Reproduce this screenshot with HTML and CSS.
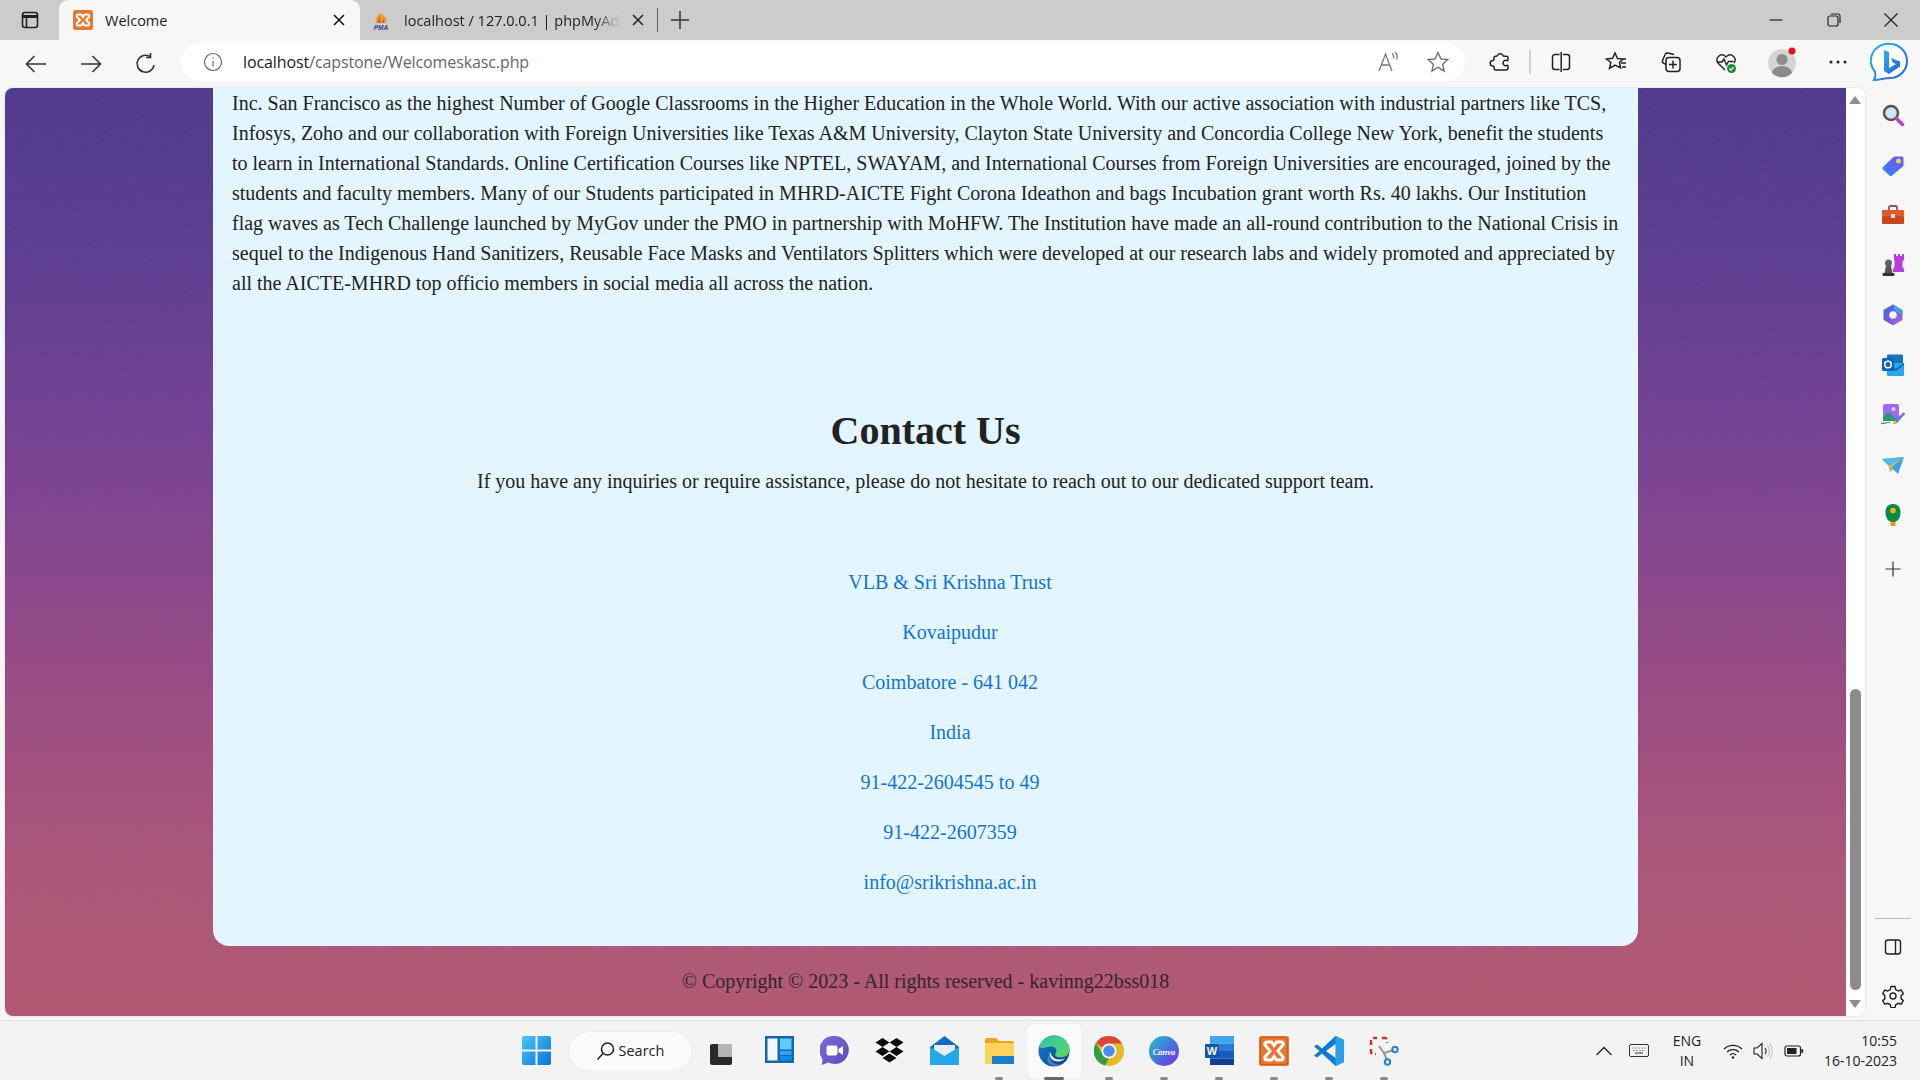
FILE: index.html
```html
<!DOCTYPE html>
<html lang="en">
<head>
<meta charset="utf-8">
<title>Welcome</title>
<link rel="stylesheet" href="styles.css">
</head>
<body>
<div class="desktop">
  <header class="tabstrip">
    <button class="tab-toggle" aria-label="Tab actions">
      <svg class="i22" viewBox="0 0 22 22" fill="none" stroke="#222" stroke-width="1.6"><rect x="3.5" y="3.5" width="15" height="15" rx="2.5"/><path d="M3.5 7.5h15" stroke-width="3"/><path d="M7.5 7.5v11"/></svg>
    </button>
    <div class="tab tab-active">
      <svg class="favicon" viewBox="0 0 20 20"><rect width="20" height="20" rx="2.5" fill="#e8762f"/><path d="M5 4.5h3.2L10 7l1.8-2.500H15a1.500 1.500 0 0 1 1 2.500l-3 3 3 3a1.500 1.500 0 0 1-1 2.500h-3.200L10 13l-1.800 2.500H5a1.500 1.500 0 0 1-1-2.500l3-3-3-3a1.500 1.500 0 0 1 1-2.500z" fill="none" stroke="#fff" stroke-width="2"/></svg>
      <span class="tab-title">Welcome</span>
      <svg class="i16" viewBox="0 0 16 16" fill="none" stroke="#111" stroke-width="1.5"><path d="M3 3l10 10M13 3L3 13"/></svg>
    </div>
    <div class="tab tab-other">
      <svg class="favicon" viewBox="0 0 20 20"><path d="M9 1c1 3-4 6-5 9l2 3h8l2-3c-1-3-4-4-5-7-1 1-1 2-1 3z" fill="#f09a3a"/><path d="M6 13l3-8 1 8zM11 13l1-5 2 5z" fill="#d96a1c"/><text x="10" y="19.500" class="pma">PMA</text></svg>
      <span class="tab-title tab-fade">localhost / 127.0.0.1 | phpMyAdmin</span>
      <svg class="i16" viewBox="0 0 16 16" fill="none" stroke="#222" stroke-width="1.500"><path d="M3 3l10 10M13 3L3 13"/></svg>
    </div>
    <span class="tab-sep"></span>
    <svg class="newtab" viewBox="0 0 20 20" fill="none" stroke="#333" stroke-width="1.500"><path d="M10 1v18M1 10h18"/></svg>
    <div class="winctl">
      <svg class="i16" viewBox="0 0 16 16" fill="none" stroke="#222" stroke-width="1.200"><path d="M1.500 8h13"/></svg>
      <svg class="i16" viewBox="0 0 16 16" fill="none" stroke="#222" stroke-width="1.200"><rect x="2" y="4" width="10" height="10" rx="2"/><path d="M5 2h7a2 2 0 0 1 2 2v7"/></svg>
      <svg class="i16" viewBox="0 0 16 16" fill="none" stroke="#222" stroke-width="1.200"><path d="M1.500 1.500l13 13M14.500 1.500l-13 13"/></svg>
    </div>
  </header>

  <nav class="toolbar">
    <span class="tb"><svg class="i24" viewBox="0 0 24 24" fill="none" stroke="#333" stroke-width="1.600"><path d="M22 12H2.500M10.500 4l-8 8 8 8"/></svg></span>
    <span class="tb"><svg class="i24" viewBox="0 0 24 24" fill="none" stroke="#333" stroke-width="1.600"><path d="M2 12h19.500M13.500 4l8 8-8 8"/></svg></span>
    <span class="tb"><svg class="i24" viewBox="0 0 24 24" fill="none" stroke="#333" stroke-width="1.600"><path d="M20 13a8.500 8.500 0 1 1-3.500-8.200M16.500 1v4.500H12"/></svg></span>
    <div class="addressbar">
      <svg class="i20" viewBox="0 0 20 20" fill="none" stroke="#666" stroke-width="1.200"><circle cx="10" cy="10" r="8.500"/><path d="M10 9v5.500M10 5.500v1.500"/></svg>
      <span class="url"><b>localhost</b>/capstone/Welcomeskasc.php</span>
      <svg class="i24 addr-aloud" viewBox="0 0 24 24" fill="none" stroke="#777" stroke-width="1.300"><path d="M2 21L8.500 4 15 21M4.500 15h8M15 3.500c1.500 1 2 3 1.500 5M18 2c2.200 2 2.700 4.700 1.700 7.500"/></svg>
      <svg class="i24 addr-star" viewBox="0 0 24 24" fill="none" stroke="#666" stroke-width="1.300"><path d="M12 2.500l2.900 6.300 6.900.8-5.100 4.700 1.400 6.800L12 17.200l-6.100 3.900 1.400-6.800-5.100-4.700 6.900-.8z"/></svg>
    </div>
    <div class="tools">
      <span class="tb tb-first"><svg class="i24" viewBox="0 0 24 24" fill="none" stroke="#222" stroke-width="1.500"><path d="M9.500 5.500a3 3 0 0 1 5.500 0c.3.700.5.800 1 .8h2.500a1.500 1.500 0 0 1 1.500 1.500v2c0 .7-.5 1-1 .8a2.700 2.700 0 1 0 0 4.800c.5-.2 1 .1 1 .8v1.800a2 2 0 0 1-2 2H8a2 2 0 0 1-2-2v-1c0-.6-.4-1-1-1a2.800 2.800 0 0 1 0-5.600c.6 0 1-.4 1-1V8a1.500 1.500 0 0 1 1.500-1.700c1 0 1.700-.1 2-.8z"/></svg></span>
      <span class="tool-sep"></span>
      <span class="tb tb-split"><svg class="i24" viewBox="0 0 24 24" fill="none" stroke="#222" stroke-width="1.500"><path d="M10.500 4.500H6a2.500 2.500 0 0 0-2.500 2.500v10A2.500 2.500 0 0 0 6 19.500h4.500M14 4.500h4A2.500 2.500 0 0 1 20.500 7v10a2.500 2.500 0 0 1-2.500 2.500h-4M12.200 2v20"/></svg></span>
      <span class="tb"><svg class="i24" viewBox="0 0 24 24" fill="none" stroke="#222" stroke-width="1.500"><path d="M11 3l2.500 5.500 5.500.6-3.500 3.400 1 5.300-5.500-2.800-5.500 3.500 1.300-6L2.500 9l6-.7zM16 9h6M17 13h5M18 17h4"/></svg></span>
      <span class="tb"><svg class="i24" viewBox="0 0 24 24" fill="none" stroke="#222" stroke-width="1.500"><rect x="7" y="7.500" width="14" height="14" rx="3"/><path d="M14 10.500v8M10 14.500h8M15 4.500L9 3a2.500 2.500 0 0 0-3 1.800L3.500 10.500a2.500 2.500 0 0 0 1.500 3l2 .9"/></svg></span>
      <span class="tb"><svg class="i24" viewBox="0 0 24 24" fill="none" stroke="#222" stroke-width="1.400"><path d="M11 20L4 13A5 5 0 0 1 11 6l1 1 1-1a5 5 0 0 1 7 7"/><path d="M3 12h5l2-3 2.500 6 2-3.500h5"/><circle cx="17.500" cy="18.500" r="4.500" fill="#1e8a3c" stroke="none"/><path d="M15.500 18.500l1.500 1.500 2.500-2.800" stroke="#fff"/></svg></span>
      <span class="tb tb-profile"><svg class="i32" viewBox="0 0 32 32"><circle cx="15" cy="17" r="14" fill="#d4d4d4"/><circle cx="15" cy="13.500" r="5.500" fill="#8b8b8b"/><path d="M5 27a10 7 0 0 1 20 0 14 14 0 0 1-20 0z" fill="#8b8b8b"/><circle cx="25" cy="5" r="3.500" fill="#e81123"/></svg></span>
      <span class="tb"><svg class="i24" viewBox="0 0 24 24" fill="#222"><circle cx="5" cy="12" r="1.500"/><circle cx="12" cy="12" r="1.500"/><circle cx="19" cy="12" r="1.500"/></svg></span>
      <span class="bing"><svg class="i40" viewBox="0 0 40 40"><defs><linearGradient id="bg1" x1="0" y1="0" x2="1" y2="1"><stop offset="0" stop-color="#2ab4f0"/><stop offset="1" stop-color="#2b5fd8"/></linearGradient></defs><path d="M20 2a17 17 0 0 1 0 34c-5 0-11 2-16 2 1.500-3 2-5 1-8A17 17 0 0 1 20 2z" fill="#fff" stroke="url(#bg1)" stroke-width="2"/><path d="M14 8l5 2v16l7-4-3-1-2-5 9 3.500v5L19 32l-5-3z" fill="url(#bg1)"/></svg></span>
    </div>
  </nav>

  <div class="workspace">
    <div class="frame">
      <main class="page">
        <svg class="noise" aria-hidden="true"><filter id="grain"><feTurbulence type="fractalNoise" baseFrequency=".35" numOctaves="3"/><feColorMatrix values="0 0 0 0 .25 0 0 0 0 .1 0 0 0 0 .3 0 0 0 1.200 -.35"/></filter><rect width="100%" height="100%" filter="url(#grain)"/></svg>
        <section class="card">
          <p class="about">Inc. San Francisco as the highest Number of Google Classrooms in the Higher Education in the Whole World. With our active association with industrial partners like TCS, Infosys, Zoho and our collaboration with Foreign Universities like Texas A&amp;M University, Clayton State University and Concordia College New York, benefit the students to learn in International Standards. Online Certification Courses like NPTEL, SWAYAM, and International Courses from Foreign Universities are encouraged, joined by the students and faculty members. Many of our Students participated in MHRD-AICTE Fight Corona Ideathon and bags Incubation grant worth Rs. 40 lakhs. Our Institution flag waves as Tech Challenge launched by MyGov under the PMO in partnership with MoHFW. The Institution have made an all-round contribution to the National Crisis in sequel to the Indigenous Hand Sanitizers, Reusable Face Masks and Ventilators Splitters which were developed at our research labs and widely promoted and appreciated by all the AICTE-MHRD top officio members in social media all across the nation.</p>
          <h2 class="contact-title">Contact Us</h2>
          <p class="contact-lead">If you have any inquiries or require assistance, please do not hesitate to reach out to our dedicated support team.</p>
          <ul class="contact-list">
            <li>VLB &amp; Sri Krishna Trust</li>
            <li>Kovaipudur</li>
            <li>Coimbatore - 641 042</li>
            <li>India</li>
            <li>91-422-2604545 to 49</li>
            <li>91-422-2607359</li>
            <li>info@srikrishna.ac.in</li>
          </ul>
        </section>
        <p class="copyright">© Copyright © 2023 - All rights reserved - kavinng22bss018</p>
      </main>
      <div class="scrollbar">
        <span class="arrow-up"></span>
        <span class="thumb"></span>
        <span class="arrow-down"></span>
      </div>
    </div>
    <aside class="sidebar">
      <span class="side"><svg class="i24" viewBox="0 0 24 24"><circle cx="10" cy="10" r="7" fill="#cfe6f7" stroke="#555" stroke-width="2.500"/><path d="M15.500 15.500l6 6" stroke="#c23ecb" stroke-width="3.500" stroke-linecap="round"/></svg></span>
      <span class="side"><svg class="i24" viewBox="0 0 24 24"><defs><linearGradient id="sg1" x1="0" y1="1" x2="1" y2="0"><stop offset="0" stop-color="#3f7bf5"/><stop offset="1" stop-color="#6a5cf0"/></linearGradient></defs><path d="M2 14L13 3.500h8a1.500 1.500 0 0 1 1.500 1.500v8L11 22.500a2 2 0 0 1-2.500 0L2 16.500a1.800 1.800 0 0 1 0-2.500z" fill="url(#sg1)"/><circle cx="17.500" cy="8" r="2.500" fill="#f0d24a"/></svg></span>
      <span class="side"><svg class="i24" viewBox="0 0 24 24"><path d="M8 7V4.500A1.500 1.500 0 0 1 9.500 3h5A1.500 1.500 0 0 1 16 4.500V7" fill="none" stroke="#8a5a48" stroke-width="1.800"/><rect x="1" y="7" width="22" height="6" rx="1" fill="#e3592a"/><rect x="1" y="13" width="22" height="8" rx="1" fill="#c9461c"/><rect x="10" y="11" width="4" height="4" fill="#ddd"/></svg></span>
      <span class="side"><svg class="i24" viewBox="0 0 24 24"><path d="M14 2h2v2h2V2h2v2h2V2h2v6l-1.500 1v6l1.500 2v3H13v-3l1.500-2V9L14 8z" fill="#b83fdc" transform="translate(-1 -1)"/><circle cx="7.500" cy="10" r="3.500" fill="#666"/><path d="M5 13h5l1.500 7h-8z" fill="#555"/><rect x="1.500" y="20" width="12" height="3" rx="1" fill="#333"/></svg></span>
      <span class="side"><svg class="i24" viewBox="0 0 24 24"><defs><linearGradient id="sg2" x1="0" y1="0" x2="1" y2="1"><stop offset="0" stop-color="#2a6fdb"/><stop offset=".5" stop-color="#7b5bd6"/><stop offset="1" stop-color="#b06ad4"/></linearGradient></defs><path d="M12 1.500l9.500 5.500v10L12 22.500 2.500 17V7z" fill="url(#sg2)"/><path d="M12 1.500l9.500 5.500v5L14 8z" fill="#37a5e8"/><circle cx="12" cy="12" r="3.800" fill="#f5f5f5"/></svg></span>
      <span class="side"><svg class="i24" viewBox="0 0 24 24"><rect x="6" y="1.500" width="16" height="10" rx="1" fill="#1372c4"/><path d="M6 10h17v12a1 1 0 0 1-1 1H7a1 1 0 0 1-1-1z" fill="#28a8ea"/><path d="M9 11l6 5 8-6v2l-8 6-6-5z" fill="#0f5da8"/><rect x="1" y="5" width="12" height="13" rx="1.500" fill="#0f63b3"/><circle cx="7" cy="11.500" r="3.300" fill="none" stroke="#fff" stroke-width="1.600"/></svg></span>
      <span class="side"><svg class="i24" viewBox="0 0 24 24"><rect x="2" y="1" width="16" height="17" rx="2" fill="#9b6bf2"/><path d="M2 14l5-5 5 4 6 5H2z" fill="#2a9a6d"/><circle cx="12.500" cy="6" r="2" fill="#e6d5fb"/><path d="M23 9l-9 8-2 4 4-1 8-9z" fill="#6d73e8"/><path d="M14 17l-2 4 4-1z" fill="#f0b53a"/><path d="M0 21c2-2 3 0 5-1s2-1 4 0" fill="none" stroke="#2a8a50" stroke-width="1.200"/></svg></span>
      <span class="side"><svg class="i24" viewBox="0 0 24 24"><path d="M1 6l22-2-6 17-5-5-3 3-1-6z" fill="#3aa2ea"/><path d="M1 6l22-2L8 13z" fill="#50b8f2"/><path d="M23 4L8 13l1 6 3-6z" fill="#eeb13a"/></svg></span>
      <span class="side"><svg class="i24" viewBox="0 0 24 24"><rect x="9.500" y="16" width="5" height="7" fill="#e59a1c"/><path d="M12 1c5 0 7.500 3.500 7.500 8 0 6-2.500 10-7.500 10S4.500 15 4.500 9c0-4.500 2.500-8 7.500-8z" fill="#0e8a3e"/><circle cx="12" cy="7.500" r="2.800" fill="#e8b51f"/></svg></span>
      <span class="side side-plus"><svg class="i16" viewBox="0 0 16 16" fill="none" stroke="#333" stroke-width="1.200"><path d="M8 .5v15M.5 8h15"/></svg></span>
      <span class="side-spacer"></span>
      <span class="side-rule"></span>
      <span class="side"><svg class="i20" viewBox="0 0 20 20" fill="none" stroke="#222" stroke-width="1.400"><rect x="2.500" y="3" width="15" height="14" rx="2.500"/><path d="M12.500 3v14"/></svg></span>
      <span class="side side-last"><svg class="i24" viewBox="0 0 24 24" fill="none" stroke="#222" stroke-width="1.400"><circle cx="12" cy="12" r="3"/><path d="M10 2.500h4l.7 3 2.600 1.500 3-.9 2 3.500-2.200 2.100v2.900l2.200 2.100-2 3.500-3-.9-2.600 1.500-.7 3h-4l-.7-3-2.600-1.500-3 .9-2-3.500 2.200-2.100v-2.900L1.700 9.600l2-3.500 3 .9L9.300 5.500z"/></svg></span>
    </aside>
  </div>

  <footer class="taskbar">
    <div class="task-center">
      <span class="task"><svg class="i29" viewBox="0 0 29 29"><defs><linearGradient id="w1" x1="0" y1="0" x2="1" y2="1"><stop offset="0" stop-color="#45c8f5"/><stop offset="1" stop-color="#0d74d6"/></linearGradient></defs><path d="M0 2a2 2 0 0 1 2-2h11.500v13.500H0zM15.500 0H27a2 2 0 0 1 2 2v11.500H15.500zM0 15.500h13.500V29H2a2 2 0 0 1-2-2zM15.500 15.500H29V27a2 2 0 0 1-2 2H15.500z" fill="url(#w1)"/></svg></span>
      <span class="searchpill"><svg class="i20" viewBox="0 0 20 20" fill="none" stroke="#222" stroke-width="1.500"><circle cx="11.500" cy="8" r="6"/><path d="M7 12.500L1.500 18.500"/></svg>Search</span>
      <span class="task"><svg class="i29" viewBox="0 0 29 29"><rect x="8" y="0" width="21" height="20" fill="#f4f4f4" stroke="#e4e4e4" stroke-width=".5"/><rect x="0" y="8" width="22" height="21" rx="2" fill="#2a2a2a"/><rect x="8" y="8" width="14" height="13" fill="#b5b5b5"/></svg></span>
      <span class="task"><svg class="i29" viewBox="0 0 29 29"><rect width="29" height="27" fill="#1466ad"/><rect x="2.500" y="2.500" width="10" height="22" fill="#f2f6fa"/><rect x="15" y="2.500" width="11.500" height="11" fill="#5ccbf7"/><rect x="15" y="15" width="11.500" height="4" fill="#2ba5ee"/><rect x="15" y="20" width="11.500" height="4.500" fill="#0e8ce8"/></svg></span>
      <span class="task"><svg class="i29" viewBox="0 0 29 29"><defs><linearGradient id="m1" x1="0" y1="0" x2="1" y2="1"><stop offset="0" stop-color="#7b6bd6"/><stop offset="1" stop-color="#5a4ebc"/></linearGradient></defs><path d="M14.500 0a14 14 0 1 1-6 26.500L1.500 29c1-2.500 1.300-4.500.5-7A14 14 0 0 1 14.500 0z" fill="url(#m1)"/><rect x="6.500" y="9.500" width="11" height="10" rx="2" fill="#fff"/><path d="M18.500 13l4.500-3v9l-4.500-3z" fill="#fff"/></svg></span>
      <span class="task"><svg class="i29" viewBox="0 0 29 29" fill="#0b0b0b"><path d="M7.500 2l7 4.500-7 4.500-7-4.500zM21.500 2l7 4.500-7 4.500-7-4.500zM7.500 11l7 4.500-7 4.500-7-4.500zM21.500 11l7 4.500-7 4.500-7-4.500zM14.500 17.500l7 4.500-7 4.500-7-4.500z"/></svg></span>
      <span class="task"><svg class="i29" viewBox="0 0 29 29"><path d="M0 11L14.500 0 29 11v17H0z" fill="#0d6fbd"/><path d="M4 9h21v8l-10.500 6L4 17z" fill="#e6eef5"/><path d="M0 11l14.500 9L29 11v18H0z" fill="#25a8ea"/></svg></span>
      <span class="task task-run"><svg class="i29" viewBox="0 0 29 29"><path d="M0 4a2 2 0 0 1 2-2h9l3 3h13a2 2 0 0 1 2 2v20H0z" fill="#e8a91e"/><rect y="7" width="29" height="21" rx="1" fill="#fcd45c"/><rect x="7" y="20" width="22" height="8" fill="#1a7fc7"/></svg></span>
      <span class="task task-run task-active"><svg class="i32" viewBox="0 0 32 32"><defs><linearGradient id="e1" x1="0" y1="0" x2="1" y2="1"><stop offset="0" stop-color="#2fc4b0"/><stop offset="1" stop-color="#5fd65a"/></linearGradient><linearGradient id="e2" x1="0" y1="0" x2="1" y2="1"><stop offset="0" stop-color="#1a7ed0"/><stop offset="1" stop-color="#0a3e8c"/></linearGradient></defs><circle cx="16" cy="16" r="15.500" fill="url(#e2)"/><path d="M2 10C5 3 11 .5 16 .5c9 0 15.500 7 15.500 14 0 5-4 8-9 8-3 0-5.500-1-5.500-3 0-1 1-1.500 1.500-3 .5-2-1.500-5-5-5-5 0-8 3-12 .5" fill="url(#e1)"/><path d="M11 20c0 6 6 11 14 9-3 2-8 3-12 1-4-2-5-6-2-10z" fill="#fff" opacity=".25"/><path d="M12 17c-2 5 3 10 9 9.500 3-.3 5-2 6-3.500-3 2-8 2-11 0-2-1.500-3-3.500-4-6z" fill="#f2f2f2"/></svg></span>
      <span class="task task-run"><svg class="i30" viewBox="0 0 30 30"><circle cx="15" cy="15" r="15" fill="#e7b925"/><path d="M15 0a15 15 0 0 1 13 7.500H15a7.500 7.500 0 0 0-6.500 3.800L2 7A15 15 0 0 1 15 0z" fill="#db4437"/><path d="M2 7l6.500 11.300A7.500 7.500 0 0 0 15 22.500l-4 7A15 15 0 0 1 2 7z" fill="#2f9e44"/><circle cx="15" cy="15" r="7.500" fill="#fff"/><circle cx="15" cy="15" r="5.800" fill="#4c8bf0"/></svg></span>
      <span class="task task-run"><svg class="i30" viewBox="0 0 30 30"><defs><linearGradient id="c1" x1="0" y1="0" x2="1" y2="1"><stop offset="0" stop-color="#1fc4c8"/><stop offset=".55" stop-color="#4a6fdc"/><stop offset="1" stop-color="#7d2ae8"/></linearGradient></defs><circle cx="15" cy="15" r="15" fill="url(#c1)"/><text x="15" y="18.500" class="canva">Canva</text></svg></span>
      <span class="task task-run"><svg class="i29" viewBox="0 0 29 29"><rect x="5" y="0" width="24" height="7.500" fill="#41a5ee"/><rect x="5" y="7.500" width="24" height="7.500" fill="#2b7cd3"/><rect x="5" y="15" width="24" height="7.500" fill="#185abd"/><rect x="5" y="22.500" width="24" height="6.500" fill="#103f91"/><rect x="0" y="8" width="14" height="14" rx="1" fill="#1257ad"/><text x="7" y="19" class="word">W</text></svg></span>
      <span class="task task-run"><svg class="i30" viewBox="0 0 30 30"><rect width="30" height="30" rx="2.500" fill="#e8762f"/><rect x="1.500" y="1.500" width="27" height="27" rx="1.500" fill="none" stroke="#c55e1f"/><path d="M8 6h4.500L15 9.500 17.500 6H22a2 2 0 0 1 1.500 3.500L19 15l4.500 5.500A2 2 0 0 1 22 24h-4.500L15 20.500 12.500 24H8a2 2 0 0 1-1.500-3.500L11 15 6.500 9.500A2 2 0 0 1 8 6z" fill="none" stroke="#fff" stroke-width="3"/></svg></span>
      <span class="task task-run"><svg class="i30" viewBox="0 0 30 30"><path d="M21.500 0L30 4v22l-8.500 4L8 17.500 3 21.500 0 19.500 5.500 15 0 10.500 3 8.500 8 12.500z" fill="#0f7bd0"/><path d="M21.500 0L30 4v22l-8.500 4z" fill="#25a4ea"/><path d="M21.500 8v14L12 15z" fill="#f3f3f3"/></svg></span>
      <span class="task task-run"><svg class="i30" viewBox="0 0 30 30" fill="none"><path d="M2 9V4a2 2 0 0 1 2-2h4M13 2h3a2 2 0 0 1 2 2v3M2 13v3a2 2 0 0 0 2 2h3" stroke="#c0392b" stroke-width="2.500" stroke-dasharray="5 3"/><path d="M10 10l5 7 10-3" stroke="#999" stroke-width="2"/><path d="M15 17l3 7" stroke="#999" stroke-width="2"/><circle cx="26" cy="13.500" r="2.700" stroke="#1e88d8" stroke-width="2"/><circle cx="18.500" cy="26" r="2.700" stroke="#1e88d8" stroke-width="2"/></svg></span>
    </div>
    <div class="tray">
      <svg class="i20 tray-chev" viewBox="0 0 20 20" fill="none" stroke="#222" stroke-width="1.300"><path d="M2.500 14L10 6.500l7.500 7.500"/></svg>
      <svg class="i20 tray-kbd" viewBox="0 0 20 20" fill="none" stroke="#333" stroke-width="1"><rect x=".5" y="3.500" width="19" height="12" rx="1.500"/><path d="M3.500 7h1M6.500 7h1M9.500 7h1M12.500 7h1M15.500 7h1M4.500 9.500h1M7.500 9.500h1M10.500 9.500h1M13.500 9.500h1M6 12h8"/></svg>
      <span class="tray-lang">ENG<br>IN</span>
      <svg class="i20 tray-wifi" viewBox="0 0 20 20" fill="none" stroke="#222" stroke-width="1.300"><path d="M1 8a13 13 0 0 1 18 0M4 11a9 9 0 0 1 12 0M7 14a4.500 4.500 0 0 1 6 0"/><circle cx="10" cy="16.500" r="1.200" fill="#222" stroke="none"/></svg>
      <svg class="i20 tray-vol" viewBox="0 0 20 20" fill="none" stroke="#222" stroke-width="1.100"><path d="M1 7h3l5-4.500v15L4 13H1z"/><path d="M12 7c1.300 1.800 1.300 4.200 0 6"/><path d="M14.500 4.500c2.300 3.300 2.300 7.700 0 11M17 2.500c3 4.500 3 10.500 0 15" stroke="#bbb"/></svg>
      <svg class="i20 tray-bat" viewBox="0 0 20 20"><rect x="1" y="5" width="15.500" height="10" rx="2" fill="none" stroke="#222" stroke-width="1.200"/><rect x="3" y="7" width="9.500" height="6" fill="#222"/><rect x="17.200" y="8" width="2" height="4" rx="1" fill="#222"/></svg>
      <span class="clock">10:55<br>16-10-2023</span>
    </div>
  </footer>
</div>
</body>
</html>
```

FILE: styles.css
```css
* { box-sizing: border-box; }
html, body { margin: 0; height: 100%; overflow: hidden; }
body { font-family: "Open Sans", "Noto Sans", sans-serif; color: #222; }
svg { display: block; flex: none; }
.i16 { width: 16px; height: 16px; }
.i20 { width: 20px; height: 20px; }
.i22 { width: 22px; height: 22px; }
.i24 { width: 24px; height: 24px; }
.i29 { width: 29px; height: 29px; }
.i30 { width: 30px; height: 30px; }
.i32 { width: 32px; height: 32px; }
.i40 { width: 40px; height: 40px; }

.desktop { width: 1920px; height: 1080px; display: flex; flex-direction: column; background: #f7f7f7; }

/* Tab strip */
.tabstrip { height: 40px; flex: none; display: flex; align-items: center; background: #cccccc; }
.tab-toggle { width: 59px; height: 40px; padding: 0 0 0 19px; border: 0; background: none; display: flex; align-items: center; }
.tab { height: 40px; display: flex; align-items: center; font-size: 14.500px; }
.tab-active { width: 301px; padding: 0 13px 0 14px; background: #f7f7f7; border-radius: 9px 9px 0 0; }
.tab-other { width: 297px; padding: 0 11px 0 11px; }
.favicon { width: 20px; height: 20px; flex: none; }
.tab-title { flex: 1; margin-left: 12px; white-space: nowrap; overflow: hidden; color: #222; }
.tab-fade { margin-left: 13px; margin-right: 10px; -webkit-mask-image: linear-gradient(to right, #000 88%, transparent 100%); mask-image: linear-gradient(to right, #000 88%, transparent 100%); }
.pma { font: italic 700 6.500px "Liberation Sans", sans-serif; fill: #234a8c; text-anchor: middle; }
.tab-sep { width: 1px; height: 24px; background: #666; }
.newtab { width: 20px; height: 20px; margin-left: 12px; }
.winctl { margin-left: auto; display: flex; gap: 41.500px; padding-right: 21px; }

/* Toolbar */
.toolbar { height: 48px; flex: none; display: flex; align-items: center; padding-left: 8px; background: #f7f7f7; }
.tb { width: 55px; height: 40px; flex: none; display: flex; align-items: center; justify-content: center; }
.addressbar { width: 1284px; height: 38px; margin-left: 8px; margin-top: -5px; padding: 0 15px 0 22px; display: flex; align-items: center; background: #fff; border-radius: 19px; font-size: 16px; }
.url { margin-left: 20px; flex: 1; color: #666; white-space: nowrap; letter-spacing: -.1px; }
.url b { font-weight: 400; color: #1a1a1a; }
.addr-aloud { margin-right: 25px; }
.tools { display: flex; align-items: center; margin-left: 7px; margin-top: -5px; }
.tb-first { width: 55px; }
.tool-sep { width: 2px; height: 24px; background: #d2d2d2; margin-left: 2px; }
.tb-split { margin-left: 2px; }
.tb-profile { margin-left: 2px; }
.bing { margin-left: 5px; }

/* Workspace */
.workspace { height: 932px; flex: none; display: flex; }
.frame { width: 1860px; height: 928px; margin-left: 5px; display: flex; border-radius: 8px; overflow: hidden; background: #fff; box-shadow: 0 0 2px rgba(0,0,0,.18); }
.page { position: relative; width: 1841px; height: 928px; flex: none; overflow: hidden; font-family: "Liberation Serif", serif; background: linear-gradient(to bottom, #4f3b8c 0%, #5f3f92 20%, #7b4492 42%, #9a4d83 65%, #ae5878 85%, #b45a72 100%); }
.noise { position: absolute; top: 0; left: 0; width: 100%; height: 100%; opacity: .16; }
.card { position: relative; margin: 0 208px; height: 858px; padding: 0 19px 49px; background: #e3f6ff; border-radius: 0 0 16px 16px; font-size: 20px; line-height: 30px; color: #222; }
.about { margin: 0; }
.contact-title { margin: 110px 0 0; font-size: 40px; line-height: 46px; font-weight: 700; text-align: center; color: #222; }
.contact-lead { margin: 12px 0 0; text-align: center; }
.contact-list { list-style: none; margin: 71px 0 0; padding: 0 0 0 49px; text-align: center; color: #1274d0; }
.contact-list li { margin-bottom: 20px; }
.copyright { position: relative; margin: 20px 0 0; font-size: 20px; line-height: 30px; text-align: center; color: #33242f; }

/* Scrollbar */
.scrollbar { width: 19px; flex: none; display: flex; flex-direction: column; align-items: center; padding: 8px 1px 8px 0; background: #fff; }
.thumb { width: 11px; height: 301px; margin-top: auto; margin-bottom: 10px; background: #8c8c8c; border-radius: 6px; }
.arrow-up { width: 0; height: 0; border-left: 6px solid transparent; border-right: 6px solid transparent; border-bottom: 8px solid #8c8c8c; }
.arrow-down { width: 0; height: 0; border-left: 6px solid transparent; border-right: 6px solid transparent; border-top: 8px solid #8c8c8c; }

/* Sidebar */
.sidebar { flex: 1; display: flex; flex-direction: column; align-items: center; padding-top: 2px; padding-left: 0; }
.side { width: 50px; height: 50px; flex: none; display: flex; align-items: center; justify-content: center; }
.side-plus { margin-top: 4px; }
.side-spacer { flex: 1; }
.side-rule { width: 36px; height: 1px; background: #bcbcbc; margin-bottom: 3px; }
.side-last { margin-bottom: 0; height: 48px; }

/* Taskbar */
.taskbar { height: 60px; flex: 1; display: flex; align-items: center; position: relative; background: #f3f3f3; border-top: 1px solid #e2e2e2; }
.task-center { display: flex; align-items: center; margin-left: 508.500px; height: 100%; }
.task { position: relative; width: 55px; height: 54px; flex: none; display: flex; align-items: center; justify-content: center; }
.task-run::after { content: ""; position: absolute; left: 50%; bottom: -2px; width: 8px; height: 3px; margin-left: -4px; background: #8a8a8a; border-radius: 2px; }
.task-active { background: #fafafa; border-radius: 5px; box-shadow: 0 0 1px rgba(0,0,0,.2); }
.task-active::after { width: 20px; margin-left: -10px; background: #5d6b77; }
.searchpill { width: 123px; height: 38px; margin: 0 5px 0 5px; display: flex; align-items: center; justify-content: center; gap: 3px; background: #fbfbfb; border-radius: 19px; font-size: 14.500px; color: #222; box-shadow: 0 0 1px rgba(0,0,0,.15); }
.canva { font: italic 700 8.500px "Liberation Serif", serif; fill: #fff; text-anchor: middle; }
.word { font: 700 11px "Liberation Sans", sans-serif; fill: #fff; text-anchor: middle; }

.tray { margin-left: auto; display: flex; align-items: center; padding-right: 23px; font-size: 14px; line-height: 20px; color: #222; }
.tray-chev { margin-right: 15px; }
.tray-lang { width: 48px; margin-left: 0; text-align: center; }
.tray-kbd { margin-right: 14px; }
.tray-wifi { margin-left: 12px; }
.tray-vol { margin-left: 10px; }
.tray-bat { margin-left: 11px; }
.clock { margin-left: 20px; text-align: right; }
```
